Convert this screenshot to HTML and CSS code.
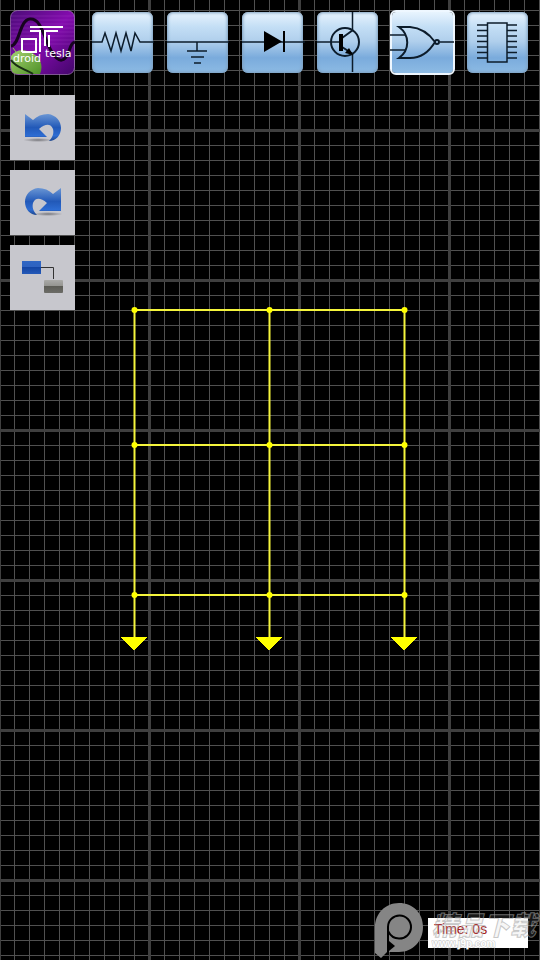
FILE: index.html
```html
<!DOCTYPE html>
<html lang="en">
<head>
    <meta charset="UTF-8">
    <meta name="viewport" content="width=device-width, initial-scale=1.0">
    <title>DroidTesla</title>
    <link rel="stylesheet" href="styles.css">
</head>
<body>
    <main class="workspace">
        <!-- Circuit -->
        <svg class="circuit" width="540" height="660" role="img" aria-label="Circuit">
            <path class="wire" d="M134 310H405M134 445H405M134 595H405M134.5 310V638M269.5 310V638M404.5 310V638"/>
            <g class="node">
                <circle cx="134.5" cy="310" r="3"/>
                <circle cx="269.5" cy="310" r="3"/>
                <circle cx="404.5" cy="310" r="3"/>
                <circle cx="134.5" cy="445" r="3"/>
                <circle cx="269.5" cy="445" r="3"/>
                <circle cx="404.5" cy="445" r="3"/>
                <circle cx="134.5" cy="595" r="3"/>
                <circle cx="269.5" cy="595" r="3"/>
                <circle cx="404.5" cy="595" r="3"/>
            </g>
            <path class="arrow" d="M121 637h26l-13 14zM256 637h26l-13 14zM391 637h26l-13 14z"/>
        </svg>

        <!-- Components -->
        <header class="toolbar">
            <button class="btn btn-logo" type="button" aria-label="DroidTesla menu">
                <svg viewBox="0 0 65 65">
                    <defs>
                        <linearGradient id="purple" x1="0" y1="0" x2="1" y2="1">
                            <stop offset="0" stop-color="#4b0c78"/>
                            <stop offset="0.5" stop-color="#840cae"/>
                            <stop offset="1" stop-color="#42066a"/>
                        </linearGradient>
                        <linearGradient id="green" x1="0" y1="0" x2="1" y2="1">
                            <stop offset="0" stop-color="#a5d070"/>
                            <stop offset="1" stop-color="#4d9127"/>
                        </linearGradient>
                    </defs>
                    <rect x="0.5" y="0.5" width="64" height="64" rx="7" fill="url(#purple)" stroke="#b58cc9" stroke-opacity=".6"/>
                    <path d="M1 6h63M1 10h63M1 14h63M1 18h63M1 22h63M1 26h63M1 30h63M1 34h63" stroke="#b04fd4" stroke-opacity=".25"/>
                    <path d="M1 36C10 35 9 10 20 9C32 8 34 30 42 42C49 54 55 52 59 41C61 35 62 33 65 32" fill="none" stroke="#16041f" stroke-width="3"/>
                    <path d="M1 46C5 40 13 39 20 42C30 46 34 55 30 64H7Q1 64 1 57Z" fill="url(#green)"/>
                    <path d="M1 50C6 58 16 59 23 64" fill="none" stroke="#172d12" stroke-width="2"/>
                    <path d="M6 42L3 38M22 43L26 40" fill="none" stroke="#8fc156" stroke-width="1"/>
                    <path d="M20 17H53M20 21H30V42M35 36V21H48M39 37V25M12 42V29H26V42H12" fill="none" stroke="#fff" stroke-width="2"/>
                    <text class="logo-text" x="3" y="52">droid</text>
                    <text class="logo-text" x="35" y="47">tesla</text>
                </svg>
            </button>
            <nav class="components" aria-label="Components">
                <button class="btn btn-component" type="button" aria-label="Resistor">
                    <svg viewBox="0 0 65 65">
                        <path class="thin" d="M2 32H12L15 23L21 41L26 23L31 41L36 23L41 41L45 23L50 32H64"/>
                    </svg>
                </button>
                <button class="btn btn-component" type="button" aria-label="Ground">
                    <svg viewBox="0 0 65 65">
                        <path class="thin" d="M2 32H64M32 32V41M22 41H42M26 47H39M29 53H36"/>
                    </svg>
                </button>
                <button class="btn btn-component" type="button" aria-label="Diode">
                    <svg viewBox="0 0 65 65">
                        <path class="thin" d="M2 32H65"/>
                        <path d="M24 21V42L42 31.5Z"/>
                        <path d="M44 21V42" stroke="#000" stroke-width="2"/>
                    </svg>
                </button>
                <button class="btn btn-component" type="button" aria-label="Transistor">
                    <svg viewBox="0 0 65 65">
                        <circle class="thick" cx="30" cy="32" r="14"/>
                        <path class="thin" d="M2 32H25M37.5 2V20M37.5 44V62"/>
                        <path class="thick" d="M27 28L38 20M27 37L38 44"/>
                        <path d="M24 24H28V41H24ZM38 45L30 43L34 38Z"/>
                    </svg>
                </button>
                <button class="btn btn-component btn-active" type="button" aria-label="Logic gate">
                    <svg viewBox="0 0 65 65">
                        <path class="thin" d="M0 25H15M0 40H15M50 32H64"/>
                        <path class="thick" d="M9 17H20C32 18 40 25 45 32C39 42 31 48 20 48H9C20 40 20 25 9 17Z"/>
                        <circle class="thick" cx="47" cy="32" r="2"/>
                    </svg>
                </button>
                <button class="btn btn-component" type="button" aria-label="Integrated circuit">
                    <svg viewBox="0 0 65 65">
                        <path class="thin" d="M12 15H22M12 20.5H22M12 26H22M12 31.5H22M12 37H22M12 42.5H22M12 48H22"/>
                        <path class="thin" d="M42 15H52M42 20.5H52M42 26H52M42 31.5H52M42 37H52M42 42.5H52M42 48H52"/>
                        <path class="thin" d="M22.5 13H42V52H22.5Z"/>
                    </svg>
                </button>
            </nav>
        </header>

        <!-- Edit tools -->
        <nav class="tools" aria-label="Edit">
            <button class="btn btn-tool" type="button" aria-label="Undo">
                <svg viewBox="0 0 65 65">
                    <defs>
                        <linearGradient id="blue" x1="0" y1="0" x2="0" y2="1">
                            <stop offset="0" stop-color="#6a96d4"/>
                            <stop offset="0.5" stop-color="#2259b8"/>
                            <stop offset="0.8" stop-color="#2d6cd2"/>
                            <stop offset="1" stop-color="#1d458c"/>
                        </linearGradient>
                        <radialGradient id="shade">
                            <stop offset="0" stop-color="#77777c"/>
                            <stop offset="1" stop-color="#c7c7cd"/>
                        </radialGradient>
                    </defs>
                    <ellipse cx="28" cy="45" rx="15" ry="2" fill="url(#shade)"/>
                    <path id="arrow-back" d="M15 19L23 25C27 21 32 19 38 19C46 20 51 26 51 33C51 40 46 46 39 46C43 42 44 38 43 34C41 29 36 28 29 34L37 42H15Z" fill="url(#blue)"/>
                </svg>
            </button>
            <button class="btn btn-tool" type="button" aria-label="Redo">
                <svg viewBox="0 0 65 65">
                    <ellipse cx="38" cy="44" rx="15" ry="2" fill="url(#shade)"/>
                    <use href="#arrow-back" transform="translate(66 -1) scale(-1 1)"/>
                </svg>
            </button>
            <button class="btn btn-tool" type="button" aria-label="Connect">
                <svg viewBox="0 0 65 65">
                    <defs>
                        <linearGradient id="box-blue" x1="0" y1="0" x2="0" y2="1">
                            <stop offset="0" stop-color="#3067c4"/>
                            <stop offset="0.5" stop-color="#2e62c0"/>
                            <stop offset="0.5" stop-color="#1446a4"/>
                            <stop offset="1" stop-color="#2459b8"/>
                        </linearGradient>
                        <linearGradient id="box-gray" x1="0" y1="0" x2="0" y2="1">
                            <stop offset="0" stop-color="#aaaaa8"/>
                            <stop offset="0.5" stop-color="#92928e"/>
                            <stop offset="0.5" stop-color="#5c5c56"/>
                            <stop offset="1" stop-color="#6c6c67"/>
                        </linearGradient>
                    </defs>
                    <path d="M30 22.5H43.5V34" fill="none" stroke="#333" stroke-width="1"/>
                    <rect x="12" y="16" width="19" height="13" fill="url(#box-blue)"/>
                    <rect x="34" y="35" width="19" height="13" rx="1" fill="url(#box-gray)"/>
                </svg>
            </button>
        </nav>

        <footer class="status">
            <output class="time">Time: 0s</output>
            <div class="watermark">
                <svg class="watermark-logo" viewBox="0 0 50 56">
                    <path d="M25 0C11 0 1 11 1 24V50L7 55L13 49H25C39 49 49 38 49 24S39 0 25 0Z"/>
                    <path d="M14 50V24A11.500 11.500 0 1 1 25 35.500C20 35.500 16 32 14 28" fill="none" stroke="#000" stroke-width="2"/>
                    <path d="M15 38L21 43L15 48Z" fill="#000"/>
                </svg>
                <div class="watermark-text">
                    <span class="watermark-name" lang="zh">精品下载</span>
                    <span class="watermark-site">www.j9p.com</span>
                </div>
            </div>
        </footer>
    </main>
</body>
</html>
```

FILE: styles.css
```css
* {
    box-sizing: border-box;
}

body {
    margin: 0;
    background: #000;
    font-family: "Liberation Sans", Arial, sans-serif;
}

/* Grid paper: a thin line every 15px, a thick one every 150px */
.workspace {
    position: relative;
    display: flex;
    flex-direction: column;
    min-height: 100vh;
    overflow: hidden;
    background-color: #000;
    background-image:
        linear-gradient(90deg, #3f3f3f 3px, transparent 3px),
        linear-gradient(#3f3f3f 3px, transparent 3px),
        linear-gradient(90deg, #505050 1px, transparent 1px),
        linear-gradient(#505050 1px, transparent 1px);
    background-size: 150px 150px, 150px 150px, 15px 15px, 15px 15px;
    background-position: 148px 0, 0 129px, 14px 0, 0 10px;
}

.circuit {
    position: absolute;
    top: 0;
    left: 0;
}

.wire {
    fill: none;
    stroke: #f5f53c;
    stroke-width: 2;
}

.node {
    fill: #ff0;
}

.arrow {
    fill: #ff0;
    shape-rendering: crispEdges;
}

.toolbar {
    position: relative;
    display: flex;
    gap: 15px;
    padding: 10px;
}

.components {
    display: flex;
    gap: 10px;
}

.btn {
    display: block;
    width: 65px;
    height: 65px;
    padding: 0;
    border: 0;
    background: none;
    cursor: pointer;
}

.btn svg {
    display: block;
    width: 65px;
    height: 65px;
}

.logo-text {
    font-family: "DejaVu Sans", sans-serif;
    font-size: 11px;
    fill: #fff;
}

.btn-component {
    border: 2px solid transparent;
    border-radius: 8px;
    background: linear-gradient(#e8f4fe, #c3def5 25%, #b0cfec 48%, #7aabdc 75%, #8dbbe4) padding-box;
    box-shadow: inset 0 0 3px 1px #7d9fbf;
}

.btn-component svg {
    margin: -2px;
    fill: #000;
}

.btn-active {
    border-color: #eef7ff;
    border-radius: 6px;
    box-shadow: none;
}

.thin,
.thick {
    fill: none;
    stroke: #0c1c2b;
    stroke-width: 1;
}

.btn-component .thin {
    stroke-width: 1.5;
}

.btn-component .thick {
    stroke-width: 2;
}

.tools {
    position: relative;
    display: flex;
    flex-direction: column;
    gap: 10px;
    padding: 10px;
}

.btn-tool {
    background: #c7c7cd;
}

.status {
    position: relative;
    display: flex;
    justify-content: flex-end;
    margin-top: auto;
    padding: 12px;
}

.time {
    width: 100px;
    height: 30px;
    padding-left: 6px;
    background: #fff;
    color: #a51c1c;
    font-size: 14px;
    line-height: 22px;
}

.watermark {
    position: absolute;
    right: 4px;
    bottom: 1px;
    display: flex;
    gap: 8px;
    pointer-events: none;
}

.watermark-logo {
    width: 50px;
    height: 56px;
    fill: #858585;
}

.watermark-text {
    display: flex;
    flex-direction: column;
    padding-top: 6px;
}

.watermark-name {
    color: rgba(190, 190, 190, 0.15);
    font-family: "Noto Sans CJK SC", sans-serif;
    font-size: 26px;
    font-style: italic;
    font-weight: 900;
    line-height: 30px;
    -webkit-text-stroke: 1px rgba(165, 165, 165, 0.6);
}

.watermark-site {
    color: #fff;
    font-size: 10px;
    font-weight: bold;
    line-height: 10px;
    -webkit-text-stroke: 1px #c4c4c4;
    paint-order: stroke fill;
}
```
